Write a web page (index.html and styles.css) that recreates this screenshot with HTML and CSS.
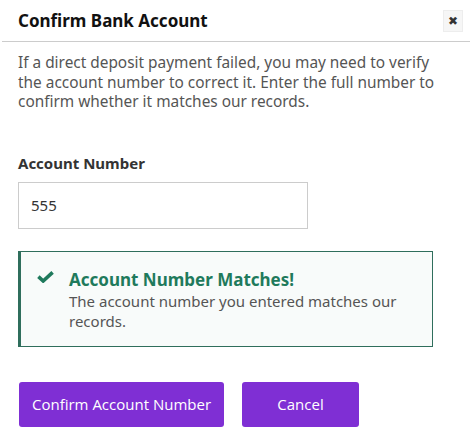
FILE: index.html
```html
<!DOCTYPE html>
<html lang="en">
  <head>
    <meta charset="utf-8" />
    <title>Confirm Bank Account</title>
    <link rel="stylesheet" href="styles.css">
  </head>
  <body>
    <div class="dialog">
      <div class="header">
        <h1 class="title">Confirm Bank Account</h1>
        <button class="close-button" aria-label="Close">&#x2716;</button>
      </div>

      <div class="content">
        <p class="intro">
          If a direct deposit payment failed, you may need to verify the account number to correct it. Enter the full number to confirm whether it matches our records.
        </p>

        <label class="field-label" for="accountNumber">Account Number</label>
        <input class="field-input" id="accountNumber" type="text" value="555" />

        <div class="alert-success">
          <svg class="alert-icon" viewBox="0 0 17 12" width="17" height="12">
            <path d="M1.4 5.6 L6.2 10 L15.6 1.4" fill="none" stroke="currentColor" stroke-width="3.6" />
          </svg>
          <div class="alert-body">
            <h2 class="alert-title">Account Number Matches!</h2>
            <p class="alert-text">The account number you entered matches our records.</p>
          </div>
        </div>

        <div class="actions">
          <button class="action-button confirm-button">Confirm Account Number</button>
          <button class="action-button cancel-button">Cancel</button>
        </div>
      </div>
    </div>
  </body>
</html>
```

FILE: styles.css
```css
:root {
  --text-color: #222222;
  --muted-color: #555555;
  --border-color: #cccccc;
  --success-color: #1f7a5c;
  --success-border: #2f6e5c;
  --button-color: #7f2fd4;
}

body {
  margin: 0;
  font-family: "Noto Sans", "Open Sans", sans-serif;
  color: var(--text-color);
  background-color: #ffffff;
}

.dialog {
  width: 470px;
}

.header {
  display: flex;
  justify-content: space-between;
  align-items: center;
  height: 42px;
  margin-left: 2px;
  padding: 0 7px 0 16px;
  box-sizing: border-box;
  border-bottom: 1px solid var(--border-color);
}

.title {
  font-size: 17px;
  font-weight: bold;
  margin: 0;
  color: #111111;
}

.close-button {
  width: 20px;
  height: 22px;
  padding: 0;
  border: 1px solid #ededed;
  background-color: #f6f6f6;
  color: #333333;
  font-size: 12px;
  line-height: 20px;
  cursor: pointer;
}

.content {
  padding: 11px 18px 0 18px;
}

.intro {
  max-width: 432px;
  margin: 0 0 41px 0;
  font-size: 15.4px;
  line-height: 19.5px;
  color: var(--muted-color);
}

.field-label {
  display: block;
  font-size: 15px;
  font-weight: bold;
  color: #333333;
  margin-bottom: 9px;
}

.field-input {
  display: block;
  width: 290px;
  height: 47px;
  box-sizing: border-box;
  padding: 0 12px;
  border: 1px solid var(--border-color);
  font-family: "Noto Sans", "Open Sans", sans-serif;
  font-size: 15px;
  color: #333333;
  margin-bottom: 22px;
}

.alert-success {
  display: flex;
  width: 415px;
  box-sizing: border-box;
  padding: 17px 12px 15px 16px;
  border: 1px solid var(--success-border);
  border-left: 3px solid var(--success-border);
  background-color: #f8fbfa;
  margin-bottom: 35px;
}

.alert-icon {
  color: var(--success-color);
  margin: 2px 15px 0 0;
  flex-shrink: 0;
}

.alert-title {
  font-size: 17px;
  font-weight: bold;
  color: var(--success-color);
  margin: 0;
  line-height: 22px;
}

.alert-text {
  margin: 0;
  font-size: 15px;
  line-height: 20px;
  color: var(--muted-color);
}

.actions {
  display: flex;
  gap: 18px;
  padding-left: 1px;
}

.action-button {
  height: 45px;
  border: none;
  border-radius: 3px;
  background-color: var(--button-color);
  color: #ffffff;
  font-family: "Open Sans", "Noto Sans", sans-serif;
  font-size: 15px;
  cursor: pointer;
}

.confirm-button {
  width: 205px;
}

.cancel-button {
  width: 117px;
}
```
